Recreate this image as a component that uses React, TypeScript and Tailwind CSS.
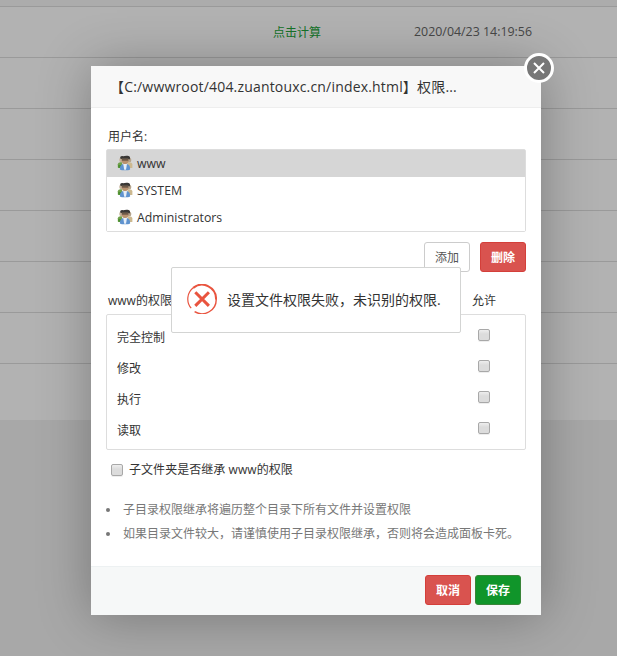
import { useState } from "react";

const users = ["www", "SYSTEM", "Administrators"];
const permissions = ["完全控制", "修改", "执行", "读取"];
const emptyRows = [1, 2, 3, 4, 5, 6];

function UserIcon() {
  return (
    <svg width="16" height="16" viewBox="0 0 16 16" className="mb-px shrink-0">
      <circle cx="4.6" cy="5" r="2.4" fill="#c4b29a" />
      <circle cx="11.8" cy="5" r="2.5" fill="#b5a48d" />
      <path d="M0.8 12.6V9.2C1 7.4 3 6.8 5 7.4L5.5 13H2Z" fill="#6fa04a" />
      <path d="M1.2 12.8V10H4V13Z" fill="#4b8f2f" />
      <path d="M10.5 7.4C13 6.8 15.2 7.6 15.4 9.6V13H11Z" fill="#cdb990" />
      <path d="M3.2 3.4C3 1.4 4.4 0.6 6 1.2C8 0.6 10 0.4 11.6 1C13.2 1.2 13.4 3.2 12.6 4.4L11.2 4H4.6Z" fill="#3a3836" />
      <path d="M4.8 3.8H11.4V6.6C11 8.4 9.6 9.4 8.1 9.4C6.4 9.4 5 8.2 4.8 6.6Z" fill="#b8926f" />
      <path d="M4.8 4.9H11.4" stroke="#55463b" strokeWidth="1.3" />
      <path d="M2.9 14.4C2.6 11.4 4 9.4 6 8.9H10C12.2 9.4 13.4 11.4 13.1 14.4C11 15.6 5 15.6 2.9 14.4Z" fill="#5f93cf" />
      <path d="M6.2 9L7.2 14.8H9L10 9Z" fill="#e6eef8" />
    </svg>
  );
}

function ErrorIcon() {
  return (
    <svg width="30" height="30" viewBox="0 0 30 30" fill="none" className="mb-0.5 shrink-0">
      <path d="M7.6 27.6A14.2 14.2 0 0 0 29.2 15" stroke="#e9543f" strokeWidth="1.4" />
      <path d="M4.2 24.2A14.2 14.2 0 0 1 6.5 3.6" stroke="#e9543f" strokeWidth="1.2" />
      <path d="M6.2 3.9A14 14 0 0 1 29 15.5" stroke="#e9543f" strokeWidth="2" />
      <path d="M8.3 8.3L21.9 21.9M21.9 8.3L8.3 21.9" stroke="#e9543f" strokeWidth="3" />
    </svg>
  );
}

function Checkbox({ label }: { label: string }) {
  return (
    <input
      type="checkbox"
      aria-label={label}
      className="block w-3 h-3 shrink-0 appearance-none rounded-[2px] border border-[#a8a8a8] bg-linear-to-b from-[#eee] to-[#dcdcdc] to-40% shadow-[0_1px_0_#eee] checked:bg-[#777]"
    />
  );
}

export default function App() {
  const [selected, setSelected] = useState("www");

  return (
    <div className="relative h-[656px] w-full overflow-hidden bg-[#f1f1f1] text-xs text-[#333] font-['Open_Sans','Noto_Sans_CJK_SC',sans-serif]">
      <div className="h-[7px] bg-[#f6f6f6] border-b border-[#ddd]" />
      <div className="flex h-[51px] items-center bg-white border-b border-[#ddd] text-[#666]">
        <span className="ml-[273px] w-[141px] pt-px text-[#20a53a]">点击计算</span>
        <span className="text-[12.4px]">2020/04/23 14:19:56</span>
      </div>
      {emptyRows.map((r) => (
        <div key={r} className="h-[51px] bg-white border-b border-[#ddd]" />
      ))}
      <div className="h-14 bg-white" />

      <div className="absolute inset-0 bg-black/30" />

      <div className="absolute left-[91px] top-[66px] flex h-[549px] w-[450px] flex-col bg-white shadow-[1px_1px_50px_rgba(0,0,0,0.3)]">
        <div className="h-[42px] shrink-0 border-b border-[#eee] bg-[#f8f8f8] pl-[19px] text-sm leading-[42px] tracking-[0.18px] whitespace-nowrap">
          【C:/wwwroot/404.zuantouxc.cn/index.html】权限...
        </div>

        <div className="flex-1 px-[15px] pt-5">
          <div className="pl-0.5 leading-[18px]">用户名:</div>
          <ul className="mt-[3px] border border-[#ddd] rounded-[2px]">
            {users.map((u) => (
              <li
                key={u}
                onClick={() => setSelected(u)}
                className={
                  "flex h-[27px] items-center gap-1 pl-[10px] " +
                  (u === selected ? "bg-[#d6d6d6]" : "bg-white")
                }
              >
                <UserIcon />
                <span className="pt-0.5 text-[12.3px]">{u}</span>
              </li>
            ))}
          </ul>

          <div className="mt-[10px] flex justify-end gap-[10px]">
            <button className="h-[30px] w-[46px] rounded-[3px] border border-[#ccc] bg-white pt-0.5 text-[#555]">
              添加
            </button>
            <button className="h-[30px] w-[46px] rounded-[3px] border border-[#d43f3a] bg-[#d9534f] pt-0.5 font-bold text-white">
              删除
            </button>
          </div>

          <div className="mt-5 flex h-[18px] items-center pl-0.5">
            <span className="w-[364px]">{selected}的权限</span>
            <span>允许</span>
          </div>
          <ul className="mt-1 h-[136px] rounded-[2px] border border-[#ddd] pt-[7px]">
            {permissions.map((p) => (
              <li key={p} className="flex h-[31px] justify-between pl-[10px] pr-[35px]">
                <span className="leading-8">{p}</span>
                <span className="pt-[7px]">
                  <Checkbox label={p} />
                </span>
              </li>
            ))}
          </ul>

          <label className="mt-[11px] flex h-[18px] items-center gap-1.5 pl-[5px]">
            <Checkbox label="inherit" />
            <span className="tracking-[0.05px]">子文件夹是否继承 {selected}的权限</span>
          </label>

          <ul className="mt-[19px] leading-6 text-[#777]">
            <li className="flex items-center gap-[13px] whitespace-nowrap">
              <i className="h-1 w-1 rounded-full bg-[#777]" />
              子目录权限继承将遍历整个目录下所有文件并设置权限
            </li>
            <li className="flex items-center gap-[13px] whitespace-nowrap">
              <i className="h-1 w-1 rounded-full bg-[#777]" />
              如果目录文件较大，请谨慎使用子目录权限继承，否则将会造成面板卡死。
            </li>
          </ul>
        </div>

        <div className="flex h-[49px] shrink-0 justify-end gap-1 border-t border-[#edf1f2] bg-[#f6f8f8] pr-5 pt-2 font-bold text-white">
          <button className="h-[30px] w-[46px] rounded-[3px] border border-[#d43f3a] bg-[#d9534f] pt-0.5">
            取消
          </button>
          <button className="h-[30px] w-[46px] rounded-[3px] border border-[#398439] bg-[#10952a] pt-0.5">
            保存
          </button>
        </div>

        <button
          aria-label="close"
          className="absolute -right-[13px] -top-[13px] flex h-[30px] w-[30px] items-center justify-center rounded-full border-3 border-white bg-[#777]"
        >
          <svg width="12" height="12" viewBox="0 0 12 12" stroke="#fff" strokeWidth="2">
            <path d="M1 1L11 11M11 1L1 11" />
          </svg>
        </button>
      </div>

      <div className="absolute left-[171px] top-[267px] flex h-[66px] w-[290px] items-center gap-[10px] rounded-[2px] border border-[#d3d4d3] bg-white pl-[15px] text-sm whitespace-nowrap">
        <ErrorIcon />
        <span>设置文件权限失败，未识别的权限.</span>
      </div>
    </div>
  );
}
